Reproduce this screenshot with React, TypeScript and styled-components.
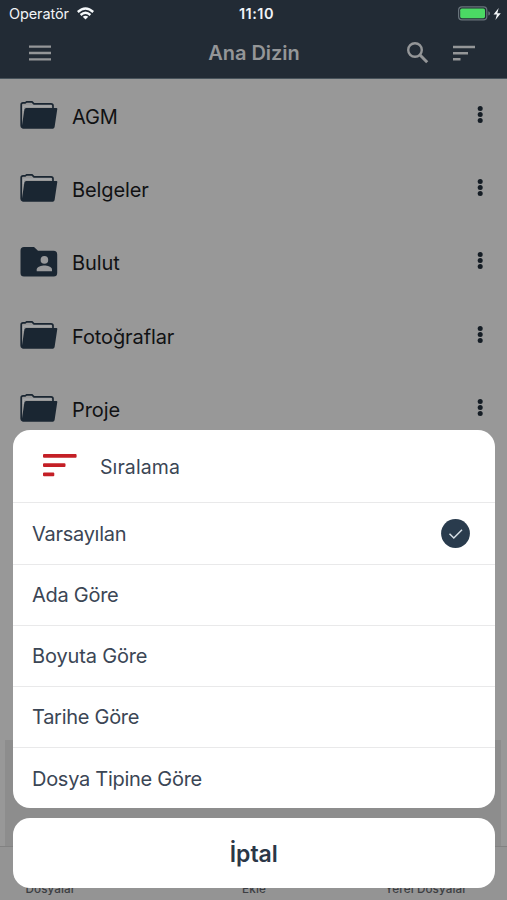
import React from "react";
import styled, { createGlobalStyle } from "styled-components";

const Global = createGlobalStyle`
  * { box-sizing: border-box; }
  html, body { margin: 0; padding: 0; }
  body { font-family: Inter, "Liberation Sans", sans-serif; background: #989898; }
`;

const Screen = styled.div`
  position: relative;
  width: 507px;
  height: 900px;
  overflow: hidden;
  background: #989898;
  display: flex;
  flex-direction: column;
`;

const Header = styled.header`
  flex: none;
  height: 79px;
  background: #222b35;
  border-bottom: 1px solid #48535b;
`;

const StatusBar = styled.div`
  display: grid;
  grid-template-columns: 1fr 60px 1fr;
  align-items: center;
  height: 27px;
  padding: 0 5px 0 9px;
  color: #f1f4f7;
`;

const Carrier = styled.div`
  display: flex;
  align-items: center;
  gap: 8px;
  font-size: 14.5px;
  letter-spacing: -0.1px;
`;

const Clock = styled.div`
  text-align: center;
  font-size: 14.5px;
  font-weight: 600;
  letter-spacing: 0.5px;
  padding-left: 2px;
`;

const Power = styled.div`
  display: flex;
  justify-content: flex-end;
  align-items: center;
`;

const NavBar = styled.div`
  display: grid;
  grid-template-columns: 80px 1fr 34px 46px;
  align-items: center;
  height: 50px;
  padding-right: 32px;
  color: #949698;
`;

const MenuSlot = styled.div`
  display: flex;
  padding-left: 29px;
`;

const NavTitle = styled.h1`
  margin: 0;
  padding: 1px 0 0 33px;
  text-align: center;
  font-size: 20px;
  font-weight: 600;
  letter-spacing: -0.05px;
  line-height: 50px;
`;

const NavAction = styled.div`
  display: flex;
  justify-content: flex-end;
`;

const FileList = styled.div`
  flex: 1;
  display: flex;
  flex-direction: column;
`;

const FileRow = styled.div`
  display: grid;
  grid-template-columns: 52px 1fr 10px;
  align-items: center;
  height: 73.3px;
  padding: 0 20px 0 20px;
`;

const FileName = styled.span`
  padding-top: 2px;
  font-size: 20px;
  letter-spacing: -0.1px;
  color: #111214;
`;

const Banner = styled.div`
  height: 106px;
  margin: auto 6px 0 5px;
  background: #8d8d8d;
`;

const TabBar = styled.nav`
  flex: none;
  height: 54px;
  border-top: 1px solid #828282;
  background: #949494;
  display: flex;
  align-items: flex-end;
  padding-bottom: 3px;
`;

const Tab = styled.span<{ $width: number; $offset?: number }>`
  flex: none;
  width: ${(p) => p.$width}px;
  margin-left: ${(p) => p.$offset ?? 0}px;
  text-align: center;
  font-size: 11.7px;
  line-height: 15px;
  font-weight: 500;
  color: #3c3e42;
  letter-spacing: 0.1px;
`;

const ActionSheet = styled.section`
  position: absolute;
  left: 13px;
  top: 430px;
  width: 481.5px;
  display: flex;
  flex-direction: column;
  gap: 10px;
`;

const Panel = styled.div`
  height: 378.3px;
  border-radius: 17px;
  overflow: hidden;
  background: #fff;
  color: #3b4655;
`;

const PanelHeader = styled.div`
  display: grid;
  grid-template-columns: 57px 1fr;
  align-items: center;
  height: 72.45px;
  padding-left: 30px;
  font-size: 19.5px;
  letter-spacing: 0.1px;
`;

const PanelTitle = styled.span`
  padding-top: 1px;
`;

const HeaderIcon = styled.span`
  display: flex;
  padding-bottom: 2px;
`;

const Option = styled.div`
  display: flex;
  align-items: center;
  justify-content: space-between;
  height: 61.15px;
  padding: 0 25px 0 19px;
  border-top: 1px solid #e9e9ea;
`;

const OptionLabel = styled.span<{ $spacing: number }>`
  padding-top: 1px;
  font-size: 20px;
  letter-spacing: ${(p) => p.$spacing}px;
`;

const Cancel = styled.button`
  height: 69.5px;
  padding: 2px 6px 0;
  border: 0;
  border-radius: 17px;
  background: #fff;
  color: #2b3747;
  font: 600 23px Inter, sans-serif;
`;

const FolderIcon = () => (
  <svg width="38" height="30" viewBox="0 0 38 30">
    <path d="M3.4 10 V6 Q3.4 5.2 4.4 5.2 H31" fill="none" stroke="#a7aaad" strokeWidth="1.2" />
    <path
      d="M2.2 26.4 Q1.2 26 1.2 24.5 V3.8 Q1.2 1.9 3 1.9 H5.2 L6.6 .8 H12 L14 2.9 H31 Q33 2.9 33 4.8 V7.4"
      fill="none" stroke="#1a2632" strokeWidth="1.7" strokeLinejoin="round"
    />
    <path d="M6.4 6.9 H36.4 Q37.5 6.9 37.3 8.1 L34.6 26 Q34.3 27.8 32.7 27.8 H3 Q1.4 27.8 1.8 25.8 L4.4 8.6 Q4.6 6.9 6.4 6.9Z" fill="#1a2632" />
  </svg>
);

const SharedFolderIcon = () => (
  <svg width="38" height="30" viewBox="0 0 38 30">
    <path d="M4 0 H14 L18 3.8 H33.5 Q37.2 3.8 37.2 7.5 V26 Q37.2 29.5 33.7 29.5 H4 Q.5 29.5 .5 26 V3.7 Q.5 0 4 0Z" fill="#1a2632" />
    <circle cx="24.4" cy="12.9" r="3.8" fill="#98999b" />
    <path d="M16.7 24.2 V22.6 C16.7 19.7 21.6 18.5 24.4 18.5 S32 19.7 32 22.6 V24.2Z" fill="#98999b" />
  </svg>
);

const DotsIcon = () => (
  <svg width="10" height="20" viewBox="0 0 10 20" fill="#151d25">
    <circle cx="3.2" cy="2.5" r="2.5" />
    <circle cx="3.2" cy="8.5" r="2.5" />
    <circle cx="3.2" cy="14.5" r="2.5" />
  </svg>
);

const WifiIcon = () => (
  <svg width="17" height="14" viewBox="0 0 17 14" fill="none" stroke="#f6f9fb" strokeWidth="2.4">
    <path d="M.8 5 Q8.5 -2 16.2 5" />
    <path d="M3.6 8 Q8.5 3.7 13.4 8" />
    <path d="M8.5 12.6 L5.7 9.8 Q8.5 7.6 11.3 9.8Z" fill="#f6f9fb" stroke="none" />
  </svg>
);

const BatteryIcon = () => (
  <svg width="44" height="16" viewBox="0 0 44 16">
    <rect x=".6" y=".9" width="28.2" height="13" rx="3.3" fill="none" stroke="#68737b" strokeWidth="1.2" />
    <rect x="2.2" y="2.6" width="24.8" height="9.6" rx="1.6" fill="#4bd964" />
    <path d="M30.3 5.2 Q32 5.6 32 7.4 T30.3 9.6Z" fill="#68737b" />
    <path d="M40.7 2 L35.5 8.5 H38.9 L37.4 14 L42.8 7.2 H39.3Z" fill="#f6f9fb" />
  </svg>
);

const MenuIcon = () => (
  <svg width="22" height="16" viewBox="0 0 22 16" fill="#949698">
    <path d="M0 .4H22V2.8H0ZM0 6.8H22V9.2H0ZM0 13.2H22V15.6H0Z" />
  </svg>
);

const SearchIcon = () => (
  <svg width="24" height="24" viewBox="0 0 24 24" fill="none" stroke="#949698" strokeWidth="2.4">
    <circle cx="10" cy="9" r="6.8" />
    <path d="M15 14 L22.2 21.2" strokeWidth="3" />
  </svg>
);

const SortIcon = ({ large = false }: { large?: boolean }) => (
  <svg
    width={large ? 34 : 22} height={large ? 23 : 16} viewBox={large ? "0 0 34 23" : "0 0 22 16"}
    fill={large ? "#c41f26" : "#949698"}
  >
    {large ? (
      <path d="M1 0H32.6Q33.6 0 33.6 1V2.8Q33.6 3.8 32.6 3.8H1Q0 3.8 0 2.8V1Q0 0 1 0ZM1 9.2H21.5Q22.5 9.2 22.5 10.2V12Q22.5 13 21.5 13H1Q0 13 0 12V10.2Q0 9.2 1 9.2ZM1 18.4H10.3Q11.3 18.4 11.3 19.4V21.2Q11.3 22.2 10.3 22.2H1Q0 22.2 0 21.2V19.4Q0 18.4 1 18.4Z" />
    ) : (
      <path d="M0 .8H22V3.2H0ZM0 7H15V9.4H0ZM0 13.1H7.5V15.5H0Z" />
    )}
  </svg>
);

const CheckIcon = () => (
  <svg width="29" height="29" viewBox="0 0 29 29">
    <circle cx="14.5" cy="14.5" r="14.4" fill="#293b4d" />
    <path d="M8.5 14.7 L12.8 19 L21 10.8" fill="none" stroke="#d7e0e7" strokeWidth="1.5" />
  </svg>
);

const files = [
  { name: "AGM", shared: false },
  { name: "Belgeler", shared: false },
  { name: "Bulut", shared: true },
  { name: "Fotoğraflar", shared: false },
  { name: "Proje", shared: false },
];

const options = [
  { label: "Varsayılan", spacing: -0.28 },
  { label: "Ada Göre", spacing: -0.28 },
  { label: "Boyuta Göre", spacing: -0.15 },
  { label: "Tarihe Göre", spacing: -0.28 },
  { label: "Dosya Tipine Göre", spacing: -0.28 },
];

export default function App() {
  return (
    <>
      <Global />
      <Screen>
        <Header>
          <StatusBar>
            <Carrier>Operatör <WifiIcon /></Carrier>
            <Clock>11:10</Clock>
            <Power><BatteryIcon /></Power>
          </StatusBar>
          <NavBar>
            <MenuSlot><MenuIcon /></MenuSlot>
            <NavTitle>Ana Dizin</NavTitle>
            <NavAction><SearchIcon /></NavAction>
            <NavAction><SortIcon /></NavAction>
          </NavBar>
        </Header>
        <FileList>
          {files.map((f) => (
            <FileRow key={f.name}>
              {f.shared ? <SharedFolderIcon /> : <FolderIcon />}
              <FileName>{f.name}</FileName>
              <DotsIcon />
            </FileRow>
          ))}
          <Banner />
        </FileList>
        <TabBar>
          <Tab $width={101}>Dosyalar</Tab>
          <Tab $width={182} $offset={62}>Ekle</Tab>
          <Tab $width={162}>Yerel Dosyalar</Tab>
        </TabBar>
        <ActionSheet>
          <Panel>
            <PanelHeader>
              <HeaderIcon><SortIcon large /></HeaderIcon>
              <PanelTitle>Sıralama</PanelTitle>
            </PanelHeader>
            {options.map((o, i) => (
              <Option key={o.label}>
                <OptionLabel $spacing={o.spacing}>{o.label}</OptionLabel>
                {i === 0 && <CheckIcon />}
              </Option>
            ))}
          </Panel>
          <Cancel>İptal</Cancel>
        </ActionSheet>
      </Screen>
    </>
  );
}
